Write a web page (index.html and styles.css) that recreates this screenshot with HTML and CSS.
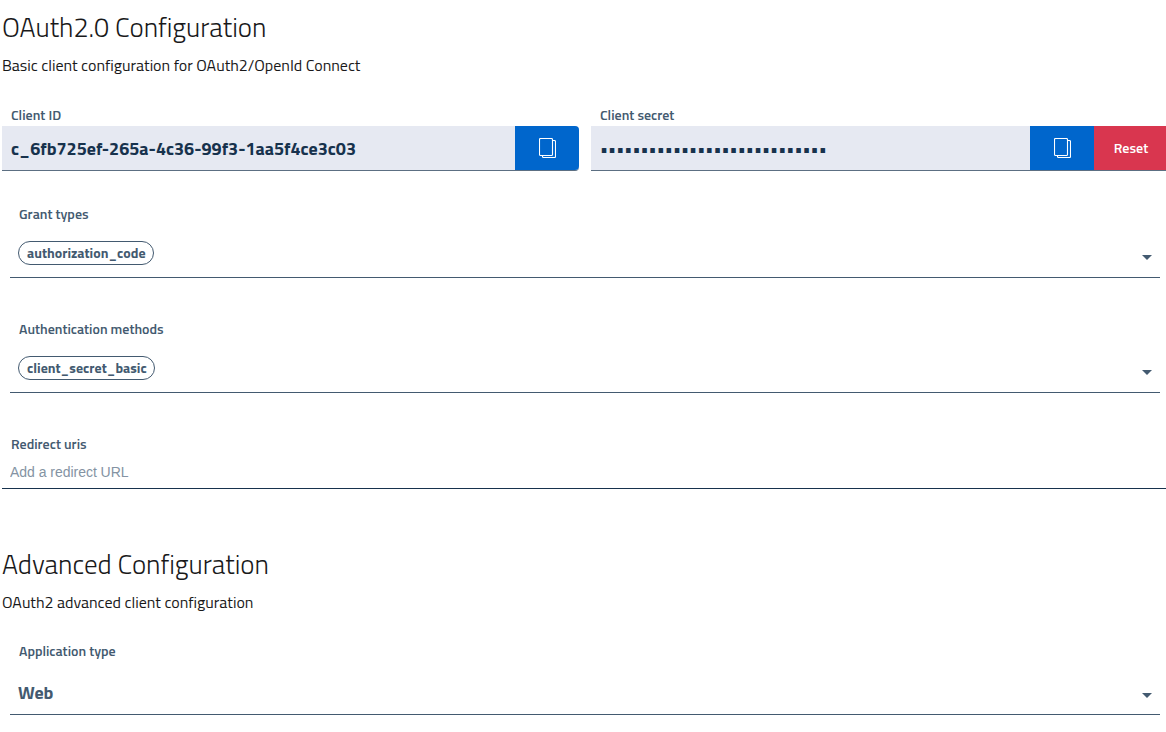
FILE: index.html
```html
<!DOCTYPE html>
<html lang="en">
<head>
<meta charset="utf-8">
<title>OAuth2.0 Configuration</title>
<link rel="stylesheet" href="styles.css">
</head>
<body>
<main class="page">
  <section class="section">
    <h1 class="title">OAuth2.0 Configuration</h1>
    <p class="lead">Basic client configuration for OAuth2/OpenId Connect</p>
    <div class="credentials">
      <div class="credential">
        <div class="label">Client ID</div>
        <div class="control">
          <div class="value">c_6fb725ef-265a-4c36-99f3-1aa5f4ce3c03</div>
          <button class="copy rounded" aria-label="Copy"><svg class="copy-icon" width="17" height="20" viewBox="0 0 17 20"><rect x="0.5" y="0.5" width="13" height="17" rx="1"/><path d="M13.5 2.5h2q1 0 1 1v15q0 1-1 1h-11q-1 0-1-1v-1"/></svg></button>
        </div>
      </div>
      <div class="credential">
        <div class="label">Client secret</div>
        <div class="control">
          <input class="value secret" type="password" value="abcdefghijklmnopqrstuvwxyz12" aria-label="Client secret">
          <button class="copy" aria-label="Copy"><svg class="copy-icon" width="17" height="20" viewBox="0 0 17 20"><rect x="0.5" y="0.5" width="13" height="17" rx="1"/><path d="M13.5 2.5h2q1 0 1 1v15q0 1-1 1h-11q-1 0-1-1v-1"/></svg></button>
          <button class="reset">Reset</button>
        </div>
      </div>
    </div>
    <div class="select grant">
      <div class="label">Grant types</div>
      <div class="select-row"><span class="chip chip-grant">authorization_code</span><svg class="caret" width="10" height="5" viewBox="0 0 10 5"><path d="M0 0h10L5 5z"/></svg></div>
    </div>
    <div class="select auth">
      <div class="label">Authentication methods</div>
      <div class="select-row"><span class="chip chip-auth">client_secret_basic</span><svg class="caret" width="10" height="5" viewBox="0 0 10 5"><path d="M0 0h10L5 5z"/></svg></div>
    </div>
    <div class="redirect">
      <div class="label">Redirect uris</div>
      <input class="redirect-input" placeholder="Add a redirect URL">
    </div>
  </section>
  <section class="section advanced">
    <h1 class="title">Advanced Configuration</h1>
    <p class="lead">OAuth2 advanced client configuration</p>
    <div class="select application">
      <div class="label">Application type</div>
      <div class="select-row"><span class="selected">Web</span><svg class="caret" width="10" height="5" viewBox="0 0 10 5"><path d="M0 0h10L5 5z"/></svg></div>
    </div>
  </section>
</main>
</body>
</html>
```
FILE: styles.css
```css
* { box-sizing: border-box; }
body {
  margin: 0;
  background: #fff;
  color: #19191a;
  font-family: "Titillium Web", Roboto, "Open Sans", sans-serif;
  overflow: hidden;
}
.page { padding: 7px 0 0 2px; white-space: nowrap; }
.title { margin: 0; height: 40px; font-size: 27px; font-weight: 300; line-height: 40px; letter-spacing: -0.02px; }
.lead { margin: 5px 0 0; height: 26px; font-size: 16px; line-height: 26px; letter-spacing: -0.01px; }
.label {
  height: 20px;
  padding-left: 9px;
  color: #435a70;
  font-size: 14px;
  font-weight: 600;
  line-height: 20px;
}
.credentials { display: grid; grid-template-columns: 577px 575px; gap: 12px; margin-top: 28px; }
.credentials .label { line-height: 18px; }
.control { display: flex; height: 45px; border-bottom: 1px solid #5c6f82; background: #e6e9f2; }
.credential:first-child .control { border-radius: 0 4px 4px 0; }
.value { flex: 1; min-width: 0; padding: 0 0 0 9px; color: #17324d; font-size: 18px; font-weight: 700; line-height: 45px; }
.secret { height: 44px; border: 0; background: none; font-family: inherit; line-height: 42px; padding-top: 1px; }
button { border: 0; padding: 0; height: 44px; font-family: inherit; color: #fff; }
.copy { width: 64px; background: #06c; display: flex; align-items: center; justify-content: center; }
.rounded { border-radius: 0 4px 4px 0; }
.copy-icon { fill: none; stroke: #fff; stroke-width: 1.1; margin-left: 1px; }
.reset { width: 72px; background: #d9364f; font-size: 14px; font-weight: 600; padding: 0 0 2px 2px; }
.select { margin: 0 6px 0 8px; height: 74px; border-bottom: 1px solid #435a70; }
.grant { margin-top: 33px; }
.auth, .redirect { margin-top: 41px; }
.select-row { display: flex; justify-content: space-between; padding: 17px 8px 0; height: 53px; }
.chip {
  height: 24px;
  border: 1px solid #435a70;
  border-radius: 12px;
  padding-left: 8px;
  color: #435a70;
  font-size: 14px;
  font-weight: 700;
  line-height: 22px;
}
.chip-grant { width: 136px; }
.chip-auth { width: 137px; }
.caret { margin-top: 14px; fill: #435a70; }
.redirect-input {
  display: block;
  width: 100%;
  height: 35px;
  padding: 1px 8px 0;
  border: 0;
  border-bottom: 1px solid #17324d;
  font: 14px "Nimbus Sans", "Liberation Sans", Arial, sans-serif;
  letter-spacing: -0.03px;
}
.redirect-input::placeholder { color: #8493a3; opacity: 1; }
.advanced { margin-top: 55px; }
.application { margin-top: 26px; }
.application .select-row { padding-top: 18px; }
.selected { color: #435a70; font-size: 18px; font-weight: 700; line-height: 28px; }
```
